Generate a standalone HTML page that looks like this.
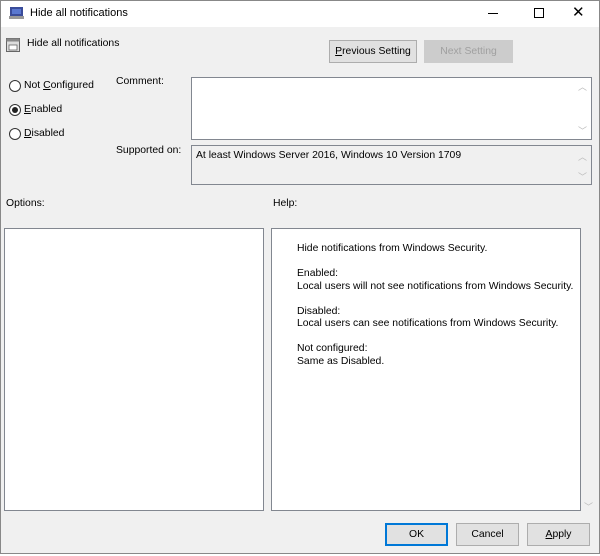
<!DOCTYPE html>
<html><head><style>
*{margin:0;padding:0;box-sizing:border-box}
body{width:600px;height:556px;background:#fff;font-family:"Liberation Sans",sans-serif;font-size:10.4px;color:#000;position:relative;overflow:hidden}
.a{position:absolute}
.win{left:0;top:0;width:600px;height:554px;border:1px solid #888;background:#f0f0f0}
.tb{left:1px;top:1px;width:598px;height:26px;background:#fff}
.box{position:absolute;background:#fff;border:1px solid #828790}
.ro{background:#f0f0f0}
.btn{position:absolute;border:1px solid #adadad;background:#e1e1e1;text-align:center;line-height:21px;font-size:10.4px}
.rad{position:absolute;width:12px;height:12px;border:1px solid #333;border-radius:50%;background:#fff}
.chev{position:absolute;color:#bbb;font-size:9px}
u{text-decoration:underline}
</style></head><body>
<div class="a win"></div>
<div class="a tb"></div>
<svg class="a" style="left:9px;top:6px" width="16" height="14"><rect x="1" y="1" width="13" height="9" fill="#3a4c9a"/><rect x="3" y="3" width="9" height="5" fill="#5a78d0"/><rect x="0" y="10" width="15" height="3" fill="#999"/></svg>
<div class="a" style="left:30px;top:7px;font-size:11px">Hide all notifications</div>
<div class="a" style="left:488px;top:13px;width:10px;height:1px;background:#000"></div>
<div class="a" style="left:534px;top:8px;width:10px;height:10px;border:1px solid #000"></div>
<div class="a" style="left:572px;top:3px;font-size:15px">✕</div>
<svg class="a" style="left:6px;top:38px" width="15" height="15"><rect x="0.5" y="0.5" width="13" height="13" fill="#ddd" stroke="#666"/><rect x="0.5" y="0.5" width="13" height="3" fill="#888"/><rect x="3" y="7" width="8" height="5" fill="#fff" stroke="#666" stroke-width=".8"/></svg>
<div class="a" style="left:27px;top:38px">Hide all notifications</div>
<div class="btn" style="left:329px;top:40px;width:88px;height:23px"><u>P</u>revious Setting</div>
<div class="btn" style="left:424px;top:40px;width:89px;height:23px;background:#ccc;border-color:#ccc;color:#a0a0a0">Next Setting</div>
<div class="rad" style="left:9px;top:80px"></div><div class="a" style="left:24px;top:80px">Not <u>C</u>onfigured</div>
<div class="rad" style="left:9px;top:104px"></div><div class="a" style="left:12px;top:107px;width:6px;height:6px;border-radius:50%;background:#222"></div><div class="a" style="left:24px;top:104px"><u>E</u>nabled</div>
<div class="rad" style="left:9px;top:128px"></div><div class="a" style="left:24px;top:128px"><u>D</u>isabled</div>
<div class="a" style="left:116px;top:76px">Comment:</div>
<div class="a" style="left:116px;top:145px">Supported on:</div>
<div class="box" style="left:191px;top:77px;width:401px;height:63px"></div>
<div class="chev" style="left:578px;top:80px">︿</div><div class="chev" style="left:578px;top:124px">﹀</div>
<div class="box ro" style="left:191px;top:145px;width:401px;height:40px"></div>
<div class="a" style="left:196px;top:150px">At least Windows Server 2016, Windows 10 Version 1709</div>
<div class="chev" style="left:578px;top:150px">︿</div><div class="chev" style="left:578px;top:170px">﹀</div>
<div class="a" style="left:6px;top:198px">Options:</div>
<div class="a" style="left:273px;top:198px">Help:</div>
<div class="box" style="left:4px;top:228px;width:260px;height:283px"></div>
<div class="box" style="left:271px;top:228px;width:310px;height:283px"></div>
<div class="chev" style="left:584px;top:500px">﹀</div>
<div class="a" style="left:297px;top:243px;line-height:12.5px">Hide notifications from Windows Security.<br><br>Enabled:<br>Local users will not see notifications from Windows Security.<br><br>Disabled:<br>Local users can see notifications from Windows Security.<br><br>Not configured:<br>Same as Disabled.</div>
<div class="btn" style="left:385px;top:523px;width:63px;height:23px;border:2px solid #0078d7;line-height:19px">OK</div>
<div class="btn" style="left:456px;top:523px;width:63px;height:23px">Cancel</div>
<div class="btn" style="left:527px;top:523px;width:63px;height:23px"><u>A</u>pply</div>
</body></html>
